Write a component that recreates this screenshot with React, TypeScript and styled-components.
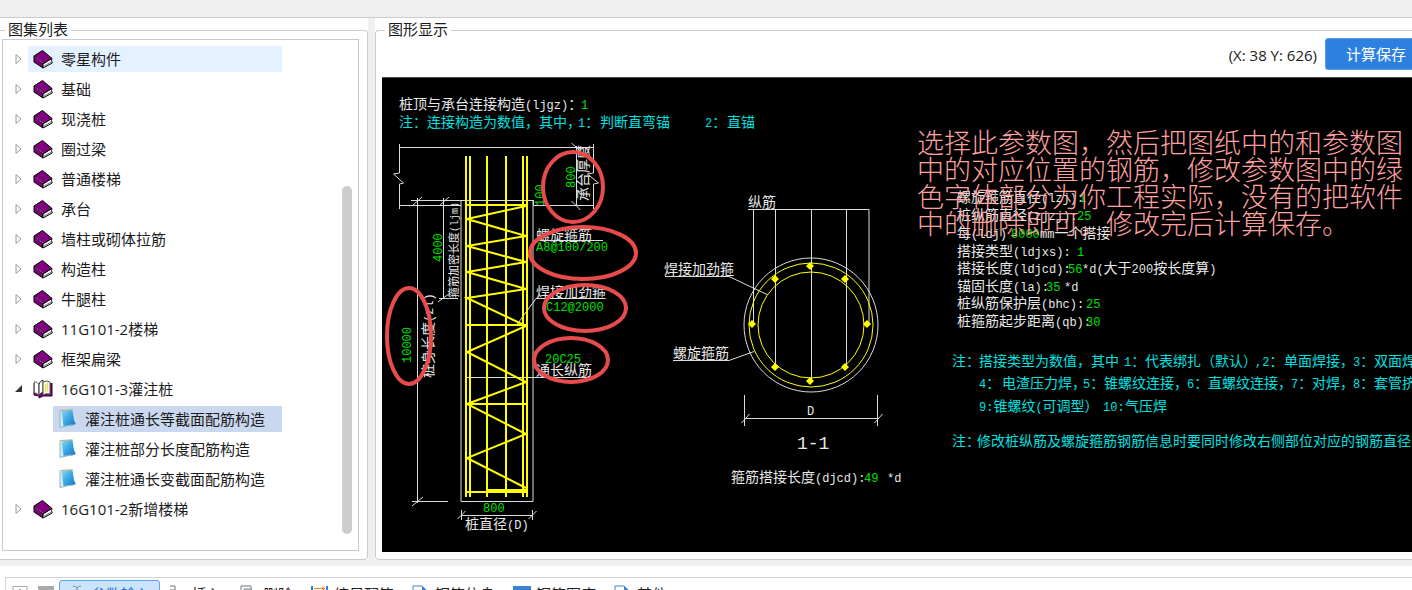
import React from "react";
import styled, { createGlobalStyle } from "styled-components";

const GlobalStyle = createGlobalStyle`
  *, *::before, *::after { box-sizing: border-box; }
  html, body { margin: 0; height: 100%; overflow: hidden; background: #fff; }
  body { font: 15px/20px "Open Sans", "Noto Sans CJK SC", sans-serif; color: #1c1c1c; }
  button { font: inherit; color: inherit; }
`;

const Page = styled.div`
  height: 100vh;
  overflow: hidden;
  display: flex;
  flex-direction: column;
`;

const TopStrip = styled.header`
  flex: none;
  height: 18px;
  background: #efefef;
  border-bottom: 1px solid #cbcbcb;
`;

const Workspace = styled.main`
  flex: none;
  display: grid;
  grid-template-columns: 368px minmax(0, 1fr);
  column-gap: 7px;
  padding-bottom: 6px;
  background: #efefef;
`;

const Pane = styled.section<{ $bleed?: boolean }>`
  display: flex;
  padding-top: 4px;
  margin-right: ${(p) => (p.$bleed ? "-15px" : "0")};
  background: #fff;
`;

const Group = styled.fieldset<{ $side: "left" | "right" }>`
  flex: 1;
  min-width: 0;
  margin: 0;
  border: 1px solid #c9cdd2;
  ${(p) =>
    p.$side === "left"
      ? "border-left: 0; border-radius: 0 4px 4px 0; padding: 0 8px 8px 2px;"
      : "border-right: 0; border-radius: 4px 0 0 4px; padding: 0 0 7px 6px;"}
`;

const GroupTitle = styled.legend`
  margin-left: 3px;
  padding: 0 3px 2px;
  line-height: 14px;
`;

const TreeBox = styled.div`
  position: relative;
  margin-top: 1px;
  padding: 4px 76px 26px 0;
  border: 1px solid #c6cad0;
`;

const TreeList = styled.ul`
  list-style: none;
  margin: 0;
  padding: 0;
`;

const TreeRow = styled.li<{ $child?: boolean }>`
  display: flex;
  align-items: center;
  height: 30px;
  padding-left: ${(p) => (p.$child ? "50px" : "0")};
`;

const Toggle = styled.button`
  display: flex;
  align-items: center;
  justify-content: center;
  width: 25px;
  height: 26px;
  padding: 0 0 0 6px;
  border: 0;
  background: none;
`;

const TreeLabel = styled.button<{ $tone?: "hover" | "selected" }>`
  flex: 1;
  display: flex;
  align-items: center;
  gap: 8px;
  height: 26px;
  padding: 0 5px;
  border: 0;
  text-align: left;
  white-space: nowrap;
  background: ${(p) =>
    p.$tone === "hover" ? "#e4f1fe" : p.$tone === "selected" ? "#c9d8ee" : "none"};
`;

const ScrollThumb = styled.div`
  position: absolute;
  top: 146px;
  right: 6px;
  width: 10px;
  bottom: 16px;
  border-radius: 5px;
  background: #cdcdcd;
`;

const CanvasHeader = styled.div`
  display: flex;
  justify-content: flex-end;
  align-items: flex-start;
  gap: 8px;
  height: 39px;
`;

const Coordinates = styled.output`
  line-height: 34px;
`;

const SaveButton = styled.button`
  height: 32px;
  padding: 0 20px;
  border: 1px solid #5a9ce8;
  border-radius: 3px;
  background: #2d7fe0;
  color: #fff;
`;

const Canvas = styled.div`
  overflow: hidden;
  background: #000;
  border-top: 1px solid #4a4a4a;
`;

const Drawing = styled.svg`
  display: block;
  font-family: "Noto Sans CJK SC", sans-serif;
`;

const LabelText = styled.text<{ $small?: boolean }>`
  font-size: ${(p) => (p.$small ? "11px" : "14px")};
`;

const Latin = styled.tspan<{ $small?: boolean }>`
  font-family: "Liberation Mono", monospace;
  font-size: ${(p) => (p.$small ? "10px" : "12px")};
`;

const Remark = styled.text`
  font-size: 27px;
  font-weight: 300;
  fill: #ffa0a0;
`;

const SectionMark = styled.text`
  font: 18px "Liberation Mono", monospace;
  fill: #e8e8e8;
`;

const Footer = styled.footer`
  flex: none;
  padding: 11px 0 0 5px;
  background: #fff;
`;

const Toolbar = styled.div`
  display: flex;
  align-items: flex-start;
  padding: 2px 0 2px 1px;
  border: 1px solid #d3d3da;
  border-right: 0;
`;

const Tool = styled.button<{ $active?: boolean }>`
  display: flex;
  align-items: center;
  gap: 5px;
  height: 28px;
  padding: 0 8px;
  border: 1px solid ${(p) => (p.$active ? "#5fa3ec" : "transparent")};
  border-radius: 3px;
  background: ${(p) => (p.$active ? "#cbe3fb" : "none")};
  color: ${(p) => (p.$active ? "#1f6fc8" : "#222")};
  white-space: nowrap;
`;

const IconTool = styled(Tool)`
  width: 26px;
  padding: 0 4px;
`;

const ClosedBook = () => (
  <svg width="20" height="20" viewBox="0 0 20 20" aria-hidden="true">
    <path d="M1 7 9.500 1.500 19 9.500 10 15Z" fill="#800080" stroke="#000" />
    <path d="M1 7v6l9 6v-4Z" fill="#800080" stroke="#000" />
    <path d="m10 15 9-5.500-.5 2 .7 2.500L10 19Z" fill="#fff" stroke="#000" />
    <path d="m11 17.200 7.500-4.500" stroke="#777" />
    <path d="m2.500 8.500 7.500 5.500" stroke="#d9a5d9" strokeDasharray="1 1" />
  </svg>
);

const OpenBook = () => (
  <svg width="20" height="20" viewBox="0 0 20 20" aria-hidden="true">
    <path d="M1 4v12l5 1v2l4-2h9V4" fill="#800080" stroke="#2b002b" />
    <path d="M1.500 2.500q4 1 4.500 3v11q-1-2-4.500-3Z" fill="#fff" stroke="#777" />
    <path d="M6 17V5Q7 2 10 1v12Q7 14 6 17Z" fill="#fff" stroke="#222" />
    <path d="M10 3q4-2 7 0v12q-5-1-7 1Z" fill="#fff" stroke="#555" />
    <path d="M12.500 4.500v9m2-10v9" stroke="#e8e45a" strokeWidth="1.500" />
  </svg>
);

const SheetIcon = () => (
  <svg width="19" height="20" viewBox="-1 0 19 20" aria-hidden="true">
    <defs>
      <linearGradient id="sheet" x1="0" y1="0" x2="1" y2="1">
        <stop offset="0" stopColor="#8fdcf6" />
        <stop offset=".5" stopColor="#3ba9e4" />
        <stop offset="1" stopColor="#1877c4" />
      </linearGradient>
    </defs>
    <path d="M12 6 17 15 12 17Z" fill="#3d86c9" />
    <path d="M1 1.500v17l13-3" fill="#d6edf6" stroke="#8db3c4" />
    <path d="M2.500 2 13.500 1l2 14-11 2Z" fill="url(#sheet)" />
    <path d="M1.500 1.500 13.500.8" stroke="#b9a66f" />
  </svg>
);

const Arrow = ({ open }: { open?: boolean }) => (
  <svg width="9" height="12" viewBox="0 0 9 12" aria-hidden="true">
    {open ? (
      <path d="M8 2v7H1Z" fill="#333" />
    ) : (
      <path d="M2 1.500v9L7 6Z" fill="#fff" stroke="#9a9a9a" />
    )}
  </svg>
);

type Node = { label: string; tone?: "hover" | "selected"; children?: Node[] };

const tree: Node[] = [
  { label: "零星构件", tone: "hover" },
  { label: "基础" },
  { label: "现浇桩" },
  { label: "圈过梁" },
  { label: "普通楼梯" },
  { label: "承台" },
  { label: "墙柱或砌体拉筋" },
  { label: "构造柱" },
  { label: "牛腿柱" },
  { label: "11G101-2楼梯" },
  { label: "框架扁梁" },
  {
    label: "16G101-3灌注桩",
    children: [
      { label: "灌注桩通长等截面配筋构造", tone: "selected" },
      { label: "灌注桩部分长度配筋构造" },
      { label: "灌注桩通长变截面配筋构造" },
    ],
  },
  { label: "16G101-2新增楼梯" },
];

const WHITE = "#e8e8e8";
const GREEN = "#00e000";
const CYAN = "#00e0e0";

type LabelProps = {
  x: number;
  y: number;
  fill?: string;
  up?: boolean;
  small?: boolean;
  children: string;
};

/* A drawing label: Latin runs are monospaced; `up` turns it to read upwards. */
const Label = ({ x, y, fill = WHITE, up, small, children }: LabelProps) => (
  <LabelText
    x={x}
    y={y}
    fill={fill}
    $small={small}
    transform={up ? `rotate(-90 ${x} ${y})` : undefined}
  >
    {children
      .split(/([\x20-\x7e]+)/)
      .filter(Boolean)
      .map((run, i) =>
        /^[\x20-\x7e]/.test(run) ? (
          <Latin key={i} $small={small}>
            {run}
          </Latin>
        ) : (
          <tspan key={i}>{run}</tspan>
        )
      )}
  </LabelText>
);

type Piece = [number, string, string?];

const Line = ({ y, pieces, fill }: { y: number; pieces: Piece[]; fill?: string }) => (
  <g>
    {pieces.map(([x, text, own]) => (
      <Label key={x} x={x} y={y} fill={own || fill}>
        {text}
      </Label>
    ))}
  </g>
);

const parameters: Piece[][] = [
  [[957, "螺旋箍筋直径(lzj):"], [1079, "1", GREEN]],
  [[957, "桩纵筋直径(zjzj):"], [1077, "25", GREEN]],
  [[957, "每(ldj)"], [1011, "8000", GREEN], [1040, "mm一个搭接"]],
  [[957, "搭接类型(ldjxs):"], [1077, "1", GREEN]],
  [[957, "搭接长度(ldjcd):"], [1068, "56", GREEN], [1082, "*d(大于200按长度算)"]],
  [[957, "锚固长度(la):"], [1046, "35", GREEN], [1064, "*d"]],
  [[957, "桩纵筋保护层(bhc):"], [1086, "25", GREEN]],
  [[957, "桩箍筋起步距离(qb):"], [1086, "30", GREEN]],
];
const parameterBaselines = [202, 220, 238, 256, 273, 291, 308, 326];

const remark = [
  "选择此参数图，然后把图纸中的和参数图",
  "中的对应位置的钢筋，修改参数图中的绿",
  "色字体部分为你工程实际，没有的把软件",
  "中的删除即可。修改完后计算保存。",
];

const bars: [number, number][] = [
  [752, 324], [775, 279], [810, 266], [845, 279], [867, 324], [775, 367], [845, 367], [810, 381],
];

const PileDrawing = () => (
  <Drawing width="1052" height="474" viewBox="382 78 1052 474" role="img" aria-label="灌注桩通长等截面配筋构造">
    <g fill="none" stroke="#dcdcdc" strokeWidth="1">
      <path d="M399.500 144v29l-6 1 10 9-4 1v25M593.500 144v29l-6 1 11 9-5 1v25M400 147.500h194M400 205.500h61M533 205.500h61" />
      <path d="M411 200.500h122v301h-72v-301M417.500 198v305M412 501.500h36M443.500 198v100M439 298.500h19" />
      <path d="m412 206 10-9m17 9 10-9m-11 105 12-9m-38 213 11-9" />
      <path d="M576.500 146v60m-5-63 9 8m-9 50 9 9M533.500 200v6" />
      <path d="M461 515.500h72M461.500 510v10M532.500 510v10m-75-1 8-8m63 8 8-8" />
      <path d="M603 240.500h-69l-8 22M604 298.500h-68l-19 26M465 377.500h124" />
      <path d="M748 209.500h121v115M753.500 209v115M775.500 209v158M811.500 209v172M846.500 209v158" />
      <path d="M665 276.500h64l38 18M673 360.500h56l25-9" />
      <path d="M744 418.500h134M744.500 395v31M877.500 395v31m-136-3 8-9m125 9 8-9" />
      <circle cx="811" cy="325" r="67" />
    </g>

    <g fill="none" stroke="#ffff00">
      <path
        strokeWidth="2"
        d="M466 156v341M470 156v341M487 156v341M506 156v341M523 156v341M527 156v341M465 205h62M465 325h62M465 404h62M465 492h62"
      />
      <path strokeWidth="3" d="M487 490.500h40" />
      <path
        strokeWidth="2"
        d="M526 206 467 219l59 17-59 10 59 16-59 10 59 17-59 9 59 28-59 26 59 30-59 22 59 30-59 24 59 30"
      />
      <circle cx="811" cy="325" r="62" />
      <circle cx="811" cy="325" r="53" />
    </g>
    <g fill="#ffff00">
      {bars.map(([x, y]) => (
        <path key={`${x}-${y}`} d={`M${x - 4} ${y}l4-4 4 4-4 4z`} />
      ))}
    </g>

    <Line y={109} pieces={[[399, "桩顶与承台连接构造(ljgz)："], [581, "1", GREEN]]} />
    <Line
      y={127}
      fill={CYAN}
      pieces={[[399, "注："], [427, "连接构造为数值，其中，"], [578, "1："], [600, "判断直弯锚"], [705, "2："], [727, "直锚"]]}
    />

    <Label x={588} y={201} up>承台厚度</Label>
    <Label x={575} y={188} fill={GREEN} up>800</Label>
    <Label x={544} y={206} fill={GREEN} up>100</Label>
    <Label x={442} y={262} fill={GREEN} up>4000</Label>
    <Label x={458} y={298} up small>箍筋加密长度(ljm)</Label>
    <Label x={411} y={363} fill={GREEN} up>10000</Label>
    <Label x={433} y={378} up>桩身长度(zl)</Label>

    <Label x={536} y={240}>螺旋箍筋</Label>
    <Label x={536} y={251} fill={GREEN}>A8@100/200</Label>
    <Label x={536} y={297}>焊接加劲箍</Label>
    <Label x={546} y={311} fill={GREEN}>C12@2000</Label>
    <Label x={545} y={363} fill={GREEN}>20C25</Label>
    <Label x={536} y={375}>通长纵筋</Label>
    <Label x={483} y={512} fill={GREEN}>800</Label>
    <Label x={465} y={529}>桩直径(D)</Label>

    <Label x={748} y={207}>纵筋</Label>
    <Label x={664} y={274}>焊接加劲箍</Label>
    <Label x={673} y={358}>螺旋箍筋</Label>
    <Label x={807} y={415}>D</Label>
    <SectionMark x={797} y={449}>1-1</SectionMark>
    <Line y={482} pieces={[[731, "箍筋搭接长度(djcd):"], [864, "49", GREEN], [887, "*d"]]} />

    {parameters.map((pieces, i) => (
      <Line key={i} y={parameterBaselines[i]} pieces={pieces} />
    ))}

    <Line
      y={366}
      fill={CYAN}
      pieces={[
        [952, "注："], [979, "搭接类型为数值，其中"], [1124, "1："], [1145, "代表绑扎（默认）"],
        [1255, ",2："], [1284, "单面焊接，"], [1353, "3："], [1374, "双面焊接"],
      ]}
    />
    <Line
      y={388}
      fill={CYAN}
      pieces={[
        [979, "4："], [1002, "电渣压力焊，"], [1083, "5："], [1104, "锥螺纹连接，"], [1187, "6："],
        [1208, "直螺纹连接，"], [1291, "7："], [1312, "对焊，"], [1353, "8："], [1374, "套管挤压"],
      ]}
    />
    <Line y={411} fill={CYAN} pieces={[[979, "9:锥螺纹(可调型）"], [1103, "10:"], [1125, "气压焊"]]} />
    <Line
      y={446}
      fill={CYAN}
      pieces={[[952, "注："], [977, "修改桩纵筋及螺旋箍筋钢筋信息时要同时修改右侧部位对应的钢筋直径"]]}
    />

    <g fill="none" stroke="#e84b4b" strokeWidth="4">
      <ellipse cx="573" cy="187" rx="30" ry="35" />
      <ellipse cx="583" cy="253" rx="53" ry="26" />
      <ellipse cx="585" cy="308" rx="41" ry="23" />
      <ellipse cx="571" cy="360" rx="37" ry="22" />
      <ellipse cx="409" cy="336" rx="22" ry="48" />
    </g>

    {remark.map((text, i) => (
      <Remark key={text} x={917} y={153 + i * 27}>
        {text}
      </Remark>
    ))}
  </Drawing>
);

const tools: { label: string; active?: boolean; icon: React.ReactNode }[] = [
  { label: "参数输入", active: true, icon: <path d="M5 1q3 0 4 2 1-2 4-2M9 3v13M1 7h4v6H1m11-6h5v6h-5" stroke="#7d8ea3" /> },
  { label: "插入", icon: <path d="M1 1h5v4H1m0 5h5v5H1" stroke="#777" /> },
  { label: "删除", icon: <path d="M1 12V1h10v3M4 15V4h7l4 4v8H4Z" stroke="#6d7680" /> },
  {
    label: "缩尺配筋",
    icon: (
      <>
        <path d="M1 1v5M16 1v5" stroke="#2d7fe0" strokeWidth="2" />
        <path d="M3 3.500h11m-3-2 3 2-3 2" stroke="#f08020" />
      </>
    ),
  },
  {
    label: "钢筋信息",
    icon: (
      <>
        <path d="M1 16V1h9l6 6v9Z" stroke="#3b82d6" />
        <path d="M10 1v6h7ZM4 6h4v1H4Z" fill="#3b82d6" />
      </>
    ),
  },
  {
    label: "钢筋图库",
    icon: (
      <>
        <path d="M1 2h16v14H1Z" stroke="#3b82d6" />
        <path d="M0 1h18v5H0Z" fill="#3b82d6" />
      </>
    ),
  },
  {
    label: "其他",
    icon: (
      <>
        <path d="M1 16V1h9l6 6v9Z" stroke="#3b82d6" />
        <path d="M10 1v6h7Z" fill="#3b82d6" />
      </>
    ),
  },
];

export default function App() {
  return (
    <Page>
      <GlobalStyle />
      <TopStrip />
      <Workspace>
        <Pane>
          <Group $side="left">
            <GroupTitle>图集列表</GroupTitle>
            <TreeBox>
              <TreeList>
                {tree.map((node) => (
                  <React.Fragment key={node.label}>
                    <TreeRow>
                      <Toggle aria-label={node.label} aria-expanded={!!node.children}>
                        <Arrow open={!!node.children} />
                      </Toggle>
                      <TreeLabel $tone={node.tone}>
                        {node.children ? <OpenBook /> : <ClosedBook />}
                        {node.label}
                      </TreeLabel>
                    </TreeRow>
                    {node.children?.map((child) => (
                      <TreeRow key={child.label} $child>
                        <TreeLabel $tone={child.tone}>
                          <SheetIcon />
                          {child.label}
                        </TreeLabel>
                      </TreeRow>
                    ))}
                  </React.Fragment>
                ))}
              </TreeList>
              <ScrollThumb />
            </TreeBox>
          </Group>
        </Pane>
        <Pane $bleed>
          <Group $side="right">
            <GroupTitle>图形显示</GroupTitle>
            <CanvasHeader>
              <Coordinates>(X: 38 Y: 626)</Coordinates>
              <SaveButton>计算保存</SaveButton>
            </CanvasHeader>
            <Canvas>
              <PileDrawing />
            </Canvas>
          </Group>
        </Pane>
      </Workspace>
      <Footer>
        <Toolbar>
          <IconTool aria-label="上移">
            <svg width="16" height="18" viewBox="0 0 16 18" fill="none" stroke="#aaa">
              <path d="M1 1.500h14v14H1Z" />
              <path d="M8 14V5M5 8l3-3 3 3" strokeWidth="2" />
            </svg>
          </IconTool>
          <IconTool aria-label="表格">
            <svg width="16" height="18" viewBox="0 0 16 18" fill="none" stroke="#aaa">
              <path d="M1 2.500h14v13H1Z" />
              <path d="M0 1h16v4H0Z" fill="#aaa" stroke="none" />
            </svg>
          </IconTool>
          {tools.map((tool) => (
            <Tool key={tool.label} $active={tool.active}>
              <svg width="18" height="18" viewBox="0 0 18 18" fill="none" aria-hidden="true">
                {tool.icon}
              </svg>
              {tool.label}
            </Tool>
          ))}
        </Toolbar>
      </Footer>
    </Page>
  );
}
